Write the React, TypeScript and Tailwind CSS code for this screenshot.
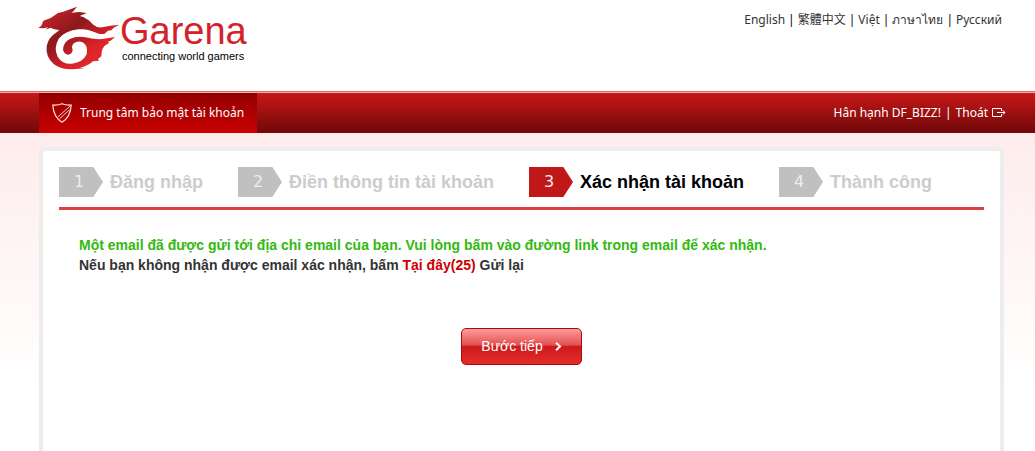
import { Fragment } from "react";
import { clsx } from "clsx";

const languages = ["English", "繁體中文", "Việt", "ภาษาไทย", "Русский"];

const steps = [
    { no: 1, label: "Đăng nhập" },
    { no: 2, label: "Điền thông tin tài khoản" },
    { no: 3, label: "Xác nhận tài khoản" },
    { no: 4, label: "Thành công" },
];

const currentStep = 3;

const Dragon = () => (
    <svg viewBox="0 0 270 222" className="h-[74px] w-[90px] shrink-0" aria-hidden="true">
        <defs>
            <linearGradient id="dragonRed" x1="0" y1="0" x2="1" y2="1">
                <stop offset="0.1" stopColor="#c4242b" />
                <stop offset="0.38" stopColor="#8c181b" />
                <stop offset="0.65" stopColor="#d9232a" />
                <stop offset="1" stopColor="#ee2e31" />
            </linearGradient>
        </defs>
        <path
            fill="url(#dragonRed)"
            d="M13 84 L22 77 L28 62 L50 54 L72 39 L88 35 L129 20 L119 33 L112 38 L136 36 L158 39 L137 48 L148 51 L166 62 L176 73 Q188 84 205 82 L229 77 L256 74 L239 83 L232 91 L222 92 L211 102 L196 102 L188 99 Q160 85 134 88 Q94 92 74 116 Q58 144 71 170 Q86 194 114 191 Q147 187 158 163 Q163 137 146 127 Q129 120 117 132 Q111 141 116 150 Q114 164 101 164 Q90 161 87 149 Q87 127 109 116 Q130 107 155 112 Q178 119 205 117 L243 111 L230 122 L222 125 L225 129 L211 138 Q204 146 203 157 L202 169 L192 177 L195 182 L177 184 Q160 199 138 203 L151 205 L125 207 Q83 211 59 192 Q34 170 38 139 Q43 112 66 98 L76 90 L61 88 L49 83 L35 89 L42 82 L29 85 Z"
        />
    </svg>
);

const Shield = () => (
    <svg viewBox="0 0 20 20" className="size-5" fill="none" stroke="#ffe3dc" aria-hidden="true">
        <path d="M.8 2 Q6 2.4 10 .8 Q14 2.4 19.2 2 Q18.6 14 10 19.2 Q1.4 14 .8 2 Z" strokeWidth="1.2" />
        <path d="M6 13.8 L18.2 3 M7.5 15.8 L17.5 6.8" strokeWidth="0.9" />
    </svg>
);

const Exit = () => (
    <svg viewBox="0 0 14 10" className="h-[10px] w-[14px]" fill="none" stroke="#fff" aria-hidden="true">
        <path d="M9.5 3 V.5 H.5 V8.5 H9.5 V6 M5 4.5 H13 M10.8 2.3 L13 4.5 L10.8 6.7" />
    </svg>
);

const Header = () => (
    <header className="flex h-[91px] items-start justify-between pl-[34px] pr-[33px]">
        <a href="#" className="flex">
            <Dragon />
            <span className="-ml-1 flex flex-col pt-3.5 font-['Liberation_Sans',Arial,sans-serif]">
                <span className="text-[38px] leading-[34px] text-[#d2232a]">Garena</span>
                <span className="pl-0.5 text-[11px] leading-4 text-black">connecting world gamers</span>
            </span>
        </a>
        <nav className="flex gap-[3px] pt-3 text-[12px] leading-4 text-[#333]">
            {languages.map((name, i) => (
                <Fragment key={name}>
                    {i > 0 && <span className="text-black">|</span>}
                    <a href="#">{name}</a>
                </Fragment>
            ))}
        </nav>
    </header>
);

const MenuBar = () => (
    <div className="border-t border-[#d66]">
        <div className="flex h-[41px] items-stretch justify-between border-t border-[#efb4b4] bg-linear-to-b from-[#c91818] to-[#700808] pl-[39px] pr-[29px] text-[12px] text-white">
            <a href="#" className="flex items-center gap-2 bg-linear-to-b from-[#920000] to-[#c90000] px-[13px]">
                <Shield />
                Trung tâm bảo mật tài khoản
            </a>
            <div className="flex items-center gap-1">
                <span>Hân hạnh DF_BIZZ!</span>
                <span>|</span>
                <a href="#" className="flex items-center gap-1">
                    Thoát
                    <Exit />
                </a>
            </div>
        </div>
    </div>
);

const StepList = () => (
    <ol className="flex gap-[35px] border-b-[3px] border-[#dc4044] pb-2.5 font-['Liberation_Sans',Arial,sans-serif]">
        {steps.map(({ no, label }) => {
            const active = no === currentStep;
            return (
                <li key={no} className={clsx("flex items-center gap-[7px] whitespace-nowrap", active ? "text-black" : "text-[#ccc]")}>
                    <span
                        className={clsx(
                            "flex h-[30px] w-11 items-center justify-center pr-1 text-[16px] text-[#eee] [clip-path:polygon(0_0,78%_0,100%_50%,78%_100%,0_100%)]",
                            "font-['DejaVu_Sans',Verdana,sans-serif]",
                            active ? "bg-[#c01818]" : "bg-[#c0c0c0]"
                        )}
                    >
                        {no}
                    </span>
                    <span className="text-[18px] leading-[30px] font-bold">{label}</span>
                </li>
            );
        })}
    </ol>
);

const App = () => {
    return (
        <div className="flex min-h-screen flex-col bg-white font-['Noto_Sans',Tahoma,'Noto_Sans_CJK_TC',sans-serif]">
            <Header />
            <MenuBar />

            <main className="flex grow flex-col bg-linear-to-b from-[#feecec] to-white to-80% pl-[39px] pr-[31px] pt-3.5">
                <section className="grow rounded-t-md border-4 border-b-0 border-[#ededed] bg-white px-4 pt-4">
                    <StepList />

                    {/* メッセージ */}
                    <div className="px-5 pt-[25px] font-['Liberation_Sans',Arial,sans-serif] text-[14px] leading-5 font-bold text-[#333]">
                        <p className="text-[#33b910]">
                            Một email đã được gửi tới địa chỉ email của bạn. Vui lòng bấm vào đường link trong email để xác nhận.
                        </p>
                        <p>
                            Nếu bạn không nhận được email xác nhận, bấm <a href="#" className="text-[#c00]">Tại đây(25)</a> Gửi lại
                        </p>
                    </div>

                    <div className="flex justify-center pt-[53px] pb-10">
                        <button
                            type="button"
                            className="flex h-[37px] w-[121px] items-center justify-center gap-3 rounded-[5px] border border-[#a80c10] bg-[linear-gradient(#ff9c9c,#e25050_46%,#cc1a1a_50%,#e42c2c)] font-['Liberation_Sans',Arial,sans-serif] text-[14px] text-white"
                        >
                            Bước tiếp
                            <svg viewBox="0 0 7 9" className="h-[9px] w-[7px]" fill="none" stroke="#fff" strokeWidth="2" aria-hidden="true">
                                <path d="M1 .8 L5 4.5 L1 8.2" />
                            </svg>
                        </button>
                    </div>
                </section>
            </main>
        </div>
    );
};

export default App;
